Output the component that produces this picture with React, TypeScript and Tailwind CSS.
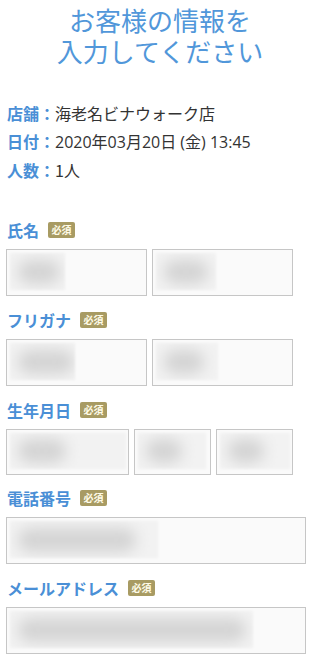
import React from "react";

const jp = { fontFamily: '"Noto Sans CJK JP", "Noto Sans", sans-serif' };

function Badge() {
  return (
    <span className="ml-[9px] inline-flex h-[16px] w-[27px] items-center justify-center rounded-[2px] bg-[#a89b63] text-[10px] font-bold leading-none text-[#fffbe8]">
      必須
    </span>
  );
}

function Label({ text }: { text: string }) {
  return (
    <div className="flex h-[16px] items-center pl-[7px]">
      <span className="text-[16px] font-bold leading-none text-[#4a8fd6]">{text}</span>
      <Badge />
    </div>
  );
}

function Blur({ w, blob }: { w: number; blob: number }) {
  return (
    <div className="relative ml-[3px] mt-[3px] h-[calc(100%-8px)] overflow-hidden bg-[#f2f2f2] blur-[1px]" style={{ width: w }}>
      <div
        className="absolute left-[8px] top-1/2 h-[24px] -translate-y-1/2 rounded-full bg-[#d4d4d4] blur-[7px]"
        style={{ width: blob }}
      />
    </div>
  );
}

function Input({ className, w, blob }: { className: string; w: number; blob: number }) {
  return (
    <div className={"border border-[#c6c6c6] bg-[#fafafa] " + className}>
      <Blur w={w} blob={blob} />
    </div>
  );
}

export default function App() {
  return (
    <div className="w-[320px] bg-white text-[#333]" style={jp}>
      <h1 className="pt-[4px] text-center text-[26px] font-normal leading-[31px] text-[#5197da]">
        お客様の情報を
        <br />
        入力してください
      </h1>

      <div className="mt-[33px] pl-[7px] text-[16px] leading-[28px]">
        <div>
          <span className="font-bold text-[#4a8fd6]">店舗：</span>海老名ビナウォーク店
        </div>
        <div>
          <span className="font-bold text-[#4a8fd6]">日付：</span>
          <span style={{ fontFamily: '"Open Sans", "Noto Sans CJK JP", sans-serif' }}>2020年03月20日 (金) 13:45</span>
        </div>
        <div>
          <span className="font-bold text-[#4a8fd6]">人数：</span>1人
        </div>
      </div>

      <div className="mt-[38px]">
        <Label text="氏名" />
        <div className="mt-[11px] ml-[6px] flex w-[287px] gap-[5px]">
          <Input className="h-[47px] flex-1" w={55} blob={42} />
          <Input className="h-[47px] flex-1" w={60} blob={44} />
        </div>
      </div>

      <div className="mt-[16px]">
        <Label text="フリガナ" />
        <div className="mt-[11px] ml-[6px] flex w-[287px] gap-[5px]">
          <Input className="h-[47px] flex-1" w={65} blob={56} />
          <Input className="h-[47px] flex-1" w={62} blob={40} />
        </div>
      </div>

      <div className="mt-[16px]">
        <Label text="生年月日" />
        <div className="mt-[11px] ml-[6px] flex w-[287px] gap-[5px]">
          <Input className="h-[46px] w-[123px]" w={116} blob={48} />
          <Input className="h-[46px] w-[77px]" w={68} blob={36} />
          <Input className="h-[46px] w-[77px]" w={70} blob={36} />
        </div>
      </div>

      <div className="mt-[15px]">
        <Label text="電話番号" />
        <div className="mt-[11px] ml-[6px] w-[300px]">
          <Input className="h-[47px] w-full" w={148} blob={118} />
        </div>
      </div>

      <div className="mt-[16px]">
        <Label text="メールアドレス" />
        <div className="mt-[11px] ml-[6px] w-[300px]">
          <Input className="h-[47px] w-full" w={243} blob={228} />
        </div>
      </div>
    </div>
  );
}
